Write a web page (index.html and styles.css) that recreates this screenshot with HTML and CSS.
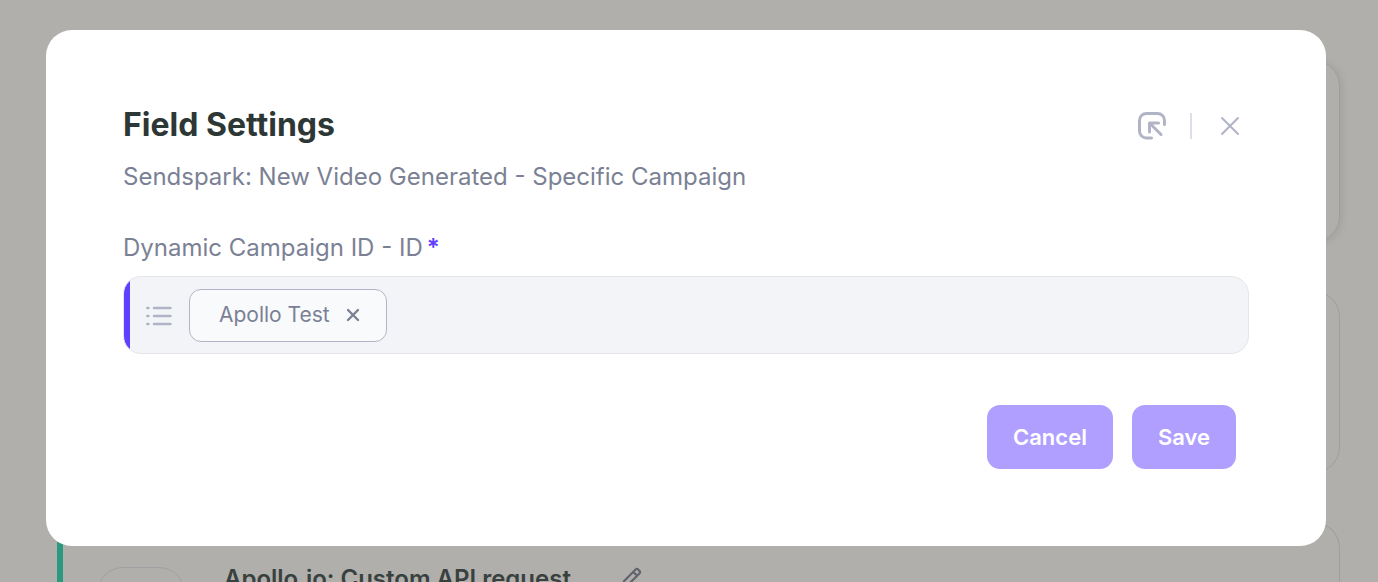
FILE: index.html
```html
<!DOCTYPE html>
<html lang="en">
<head>
<meta charset="utf-8">
<meta name="viewport" content="width=device-width, initial-scale=1">
<title>Field Settings</title>
<link rel="stylesheet" href="styles.css">
</head>
<body>
<main class="steps" inert>
  <section class="step step-raised"></section>
  <section class="step"></section>
  <section class="step step-active">
    <div class="step-logo"></div>
    <h2 class="step-title">Apollo.io: Custom API request</h2>
    <svg class="step-edit" viewBox="0 0 24 24" aria-hidden="true"><path d="M3 21l1.300-5.500L17 2.800a2 2 0 0 1 2.800 0l1.400 1.400a2 2 0 0 1 0 2.800L8.500 19.700zM14.500 5.300l4.200 4.200"/></svg>
  </section>
</main>
<div class="overlay">
  <form class="dialog" role="dialog" aria-modal="true" aria-labelledby="dialog-title">
    <header class="dialog-header">
      <h1 class="dialog-title" id="dialog-title">Field Settings</h1>
      <div class="dialog-tools">
        <button class="icon-button" type="button" aria-label="Collapse panel">
          <svg class="icon-collapse" viewBox="0 0 28 28" aria-hidden="true"><path d="M13.500 26H8.500a7 7 0 0 1-7-7v-10.500a7 7 0 0 1 7-7h11a7 7 0 0 1 7 7v4"/><path d="M11.500 20v-9h9M12 11.500l11 11"/></svg>
        </button>
        <span class="divider"></span>
        <button class="icon-button" type="button" aria-label="Close">
          <svg class="icon-close" viewBox="0 0 20 20" aria-hidden="true"><path d="M2 2l16 16M18 2L2 18"/></svg>
        </button>
      </div>
    </header>
    <p class="dialog-subtitle">Sendspark: New Video Generated - Specific Campaign</p>
    <div class="field-label" id="field-label">Dynamic Campaign ID - ID<span class="required">*</span></div>
    <div class="field" role="group" aria-labelledby="field-label">
      <svg class="icon-list" viewBox="0 0 26 20" aria-hidden="true"><path d="M1.200 2h1.300M8 2h16.500M1.200 10h1.300M8 10h16.500M1.200 18h1.300M8 18h16.500"/></svg>
      <span class="chip">Apollo Test
        <button class="icon-button" type="button" aria-label="Remove Apollo Test">
          <svg class="icon-remove" viewBox="0 0 14 14" aria-hidden="true"><path d="M2 2l10 10M12 2L2 12"/></svg>
        </button>
      </span>
    </div>
    <footer class="actions">
      <button class="button" type="button">Cancel</button>
      <button class="button" type="submit">Save</button>
    </footer>
  </form>
</div>
</body>
</html>
```
FILE: styles.css
```css
* {
  box-sizing: border-box;
}

body {
  margin: 0;
  height: 100vh;
  overflow: hidden;
  background: #b0afab;
  color: #2d3735;
  font-family: Inter, "Liberation Sans", sans-serif;
}

h1,
h2,
p {
  margin: 0;
}

svg {
  display: block;
  fill: none;
  stroke: currentColor;
  stroke-linecap: round;
  stroke-linejoin: round;
}

.steps {
  display: flex;
  flex-direction: column;
  gap: 49px;
  padding: 60px 38px 0 57px;
}

.step {
  height: 182px;
  flex-shrink: 0;
  border: 1px solid #9f9e9b;
  border-radius: 26px;
}

.step-raised {
  box-shadow: 1px 1px 8px rgba(0, 0, 0, 0.1);
}

.step-active {
  display: flex;
  align-items: flex-start;
  padding: 44px 40px 0 34px;
  border-left: 6px solid #2b9880;
  border-radius: 0 26px 26px 0;
}

.step-logo {
  width: 88px;
  height: 88px;
  border: 1px solid #a0a0a2;
  border-radius: 26px;
}

.step-title {
  margin-left: 39px;
  font-size: 24px;
  line-height: 24px;
  font-weight: 600;
  color: #39413f;
}

.step-edit {
  width: 22px;
  height: 22px;
  margin-left: 49px;
  color: #62636f;
  stroke-width: 2.400;
}

.overlay {
  position: fixed;
  inset: 0;
  padding: 30px 52px 36px 46px;
}

.dialog {
  padding: 71px 77px 77px;
  background: #fff;
  border-radius: 26px;
}

.dialog-header {
  display: flex;
  align-items: center;
  justify-content: space-between;
}

.dialog-title {
  font-size: 32px;
  line-height: 48px;
  font-weight: 700;
}

.dialog-tools {
  display: flex;
  align-items: center;
  gap: 24px;
  padding: 2px 9px 0 0;
  color: #b1b4c6;
}

.icon-button {
  padding: 0;
  border: 0;
  background: none;
  color: inherit;
  cursor: pointer;
}

.icon-collapse {
  width: 28px;
  height: 28px;
  stroke-width: 3;
}

.icon-close {
  width: 20px;
  height: 20px;
  margin-left: 4px;
  stroke-width: 2;
}

.divider {
  width: 2px;
  height: 26px;
  background: #dcdfe6;
}

.dialog-subtitle {
  margin-top: 12px;
  color: #7b8194;
  font-size: 24px;
  line-height: 32px;
}

.field-label {
  margin-top: 39px;
  color: #7b8194;
  font-size: 24px;
  line-height: 32px;
}

.required {
  margin-left: 4px;
  color: #6040ff;
  font-weight: 600;
}

.field {
  display: flex;
  align-items: center;
  gap: 17px;
  margin-top: 12px;
  padding: 12px 16px 11px;
  border: 1px solid #e4e6e9;
  border-radius: 18px;
  background: linear-gradient(to right, #6040ff 6px, #f3f4f7 6px);
  color: #b1b4c6;
}

.field .icon-list {
  margin-left: 6px;
}

.icon-list {
  width: 26px;
  height: 20px;
  stroke-width: 2.400;
}

.chip {
  display: inline-flex;
  align-items: center;
  gap: 16px;
  height: 53px;
  padding: 0 26px 2px 29px;
  border: 1px solid #b1b4c6;
  border-radius: 12px;
  background: #f9fafc;
  color: #7b8194;
  font-size: 21px;
}

.icon-remove {
  width: 14px;
  height: 14px;
  stroke-width: 2.400;
}

.actions {
  display: flex;
  justify-content: flex-end;
  gap: 19px;
  margin-top: 51px;
  padding-right: 13px;
}

.button {
  height: 64px;
  padding: 0 26px;
  border: 0;
  border-radius: 13px;
  background: #b09fff;
  color: #fff;
  font: 600 22px/32px Inter, "Liberation Sans", sans-serif;
  cursor: pointer;
}
```
